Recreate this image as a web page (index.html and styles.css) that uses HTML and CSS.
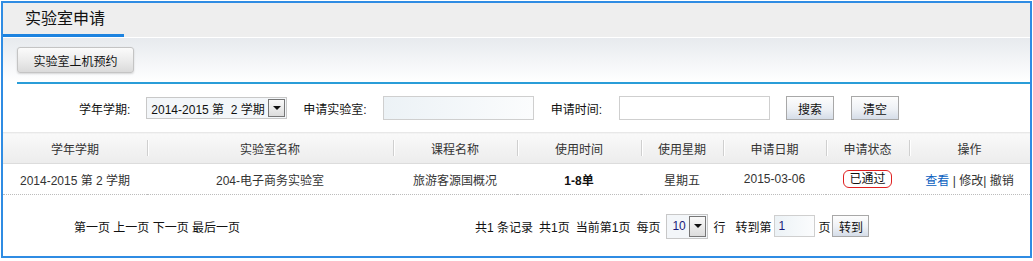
FILE: index.html
```html
<!DOCTYPE html>
<html lang="zh-CN">
<head>
  <meta charset="UTF-8">
  <title>实验室申请</title>
  <link rel="stylesheet" href="styles.css">
</head>
<body>
  <div class="panel">
    <div class="tabbar">
      <div class="tab">实验室申请</div>
    </div>
    <div class="toolbar">
      <button class="btn-tool">实验室上机预约</button>
    </div>

    <div class="search">
      <label class="lbl">学年学期:</label>
      <div class="select sel-term">
        <span class="sel-text">2014-2015 第&nbsp; 2 学期</span>
        <span class="sel-arrow"><i></i></span>
      </div>
      <label class="lbl">申请实验室:</label>
      <input type="text" class="field field-lab">
      <label class="lbl">申请时间:</label>
      <input type="text" class="field field-time">
      <button class="btn-search">搜索</button>
      <button class="btn-search">清空</button>
    </div>

    <table class="grid">
      <thead>
        <tr>
          <th class="c1">学年学期</th>
          <th class="c2">实验室名称</th>
          <th class="c3">课程名称</th>
          <th class="c4">使用时间</th>
          <th class="c5">使用星期</th>
          <th class="c6">申请日期</th>
          <th class="c7">申请状态</th>
          <th class="c8">操作</th>
        </tr>
      </thead>
      <tbody>
        <tr>
          <td>2014-2015 第 2 学期</td>
          <td>204-电子商务实验室</td>
          <td>旅游客源国概况</td>
          <td class="strong">1-8单</td>
          <td>星期五</td>
          <td>2015-03-06</td>
          <td><span class="status">已通过</span></td>
          <td class="ops"><a href="#" class="view">查看</a> | <a href="#">修改</a>| <a href="#">撤销</a></td>
        </tr>
      </tbody>
    </table>

    <div class="pager">
      <div class="pager-nav">第一页 上一页 下一页 最后一页</div>
      <div class="pager-info">
        <span>共1 条记录</span>
        <span>共1页</span>
        <span>当前第1页</span>
        <span>每页</span>
        <div class="select sel-size">
          <span class="sel-text">10</span>
          <span class="sel-arrow"><i></i></span>
        </div>
        <span>行</span>
        <span class="gap">转到第</span>
        <input type="text" class="field field-page" value="1">
        <span class="tight">页</span><button class="btn-go">转到</button>
      </div>
    </div>
  </div>
</body>
</html>
```

FILE: styles.css
```css
body {
  margin: 0;
  padding: 1px;
  font-family: "Liberation Sans", "Noto Sans CJK SC", sans-serif;
  font-size: 12px;
  color: #222;
  background: #fff;
}
.panel {
  box-sizing: border-box;
  width: 1031px;
  height: 257px;
  border: 2px solid #2f8ce3;
  background: #fff;
}
.tabbar {
  height: 34px;
  background: #eeeeee;
  border-bottom: 1px solid #fff;
}
.tab {
  box-sizing: border-box;
  width: 121px;
  height: 34px;
  padding: 5px 0 0 22px;
  font-size: 16px;
  line-height: 22px;
  color: #111;
  border-bottom: 3px solid #1d83e0;
}
.toolbar {
  height: 46px;
  padding: 9px 0 0 14px;
  box-sizing: border-box;
  background: linear-gradient(#e7eaee, #fafbfc 80%, #fff);
  border-bottom: 2px solid #2a9dd8;
  position: relative;
}
.toolbar::before {
  content: "";
  position: absolute;
  left: 0;
  bottom: -2px;
  width: 14px;
  height: 2px;
  background: #fff;
}
.btn-tool {
  width: 117px;
  height: 26px;
  padding: 0;
  font-family: inherit;
  font-size: 12px;
  color: #111;
  background: linear-gradient(#fbfbfb, #e9e9e9 60%, #dadada);
  border: 1px solid #c4c4c4;
  border-radius: 3px;
  box-shadow: 0 1px 2px rgba(0, 0, 0, 0.15);
}
.search {
  display: flex;
  align-items: center;
  height: 48px;
  padding-left: 76px;
}
.lbl {
  color: #111;
  white-space: nowrap;
}
.select {
  display: flex;
  align-items: center;
  box-sizing: border-box;
  border: 1px solid #c8c8c8;
  background: #f3f6f9;
}
.sel-term {
  width: 141px;
  height: 22px;
  margin: 0 16px;
  padding: 1px;
}
.sel-text {
  flex: 1;
  padding-left: 3px;
  font-size: 12px;
  white-space: nowrap;
  overflow: hidden;
  color: #111;
}
.sel-arrow {
  flex: none;
  box-sizing: border-box;
  width: 17px;
  height: 18px;
  border: 1px solid #777;
  background: linear-gradient(#fafafa, #dcdcdc);
  display: flex;
  align-items: center;
  justify-content: center;
}
.sel-arrow i {
  width: 0;
  height: 0;
  border-left: 4px solid transparent;
  border-right: 4px solid transparent;
  border-top: 4px solid #111;
}
.field {
  box-sizing: border-box;
  height: 24px;
  border: 1px solid #cfcfcf;
  font-family: inherit;
  font-size: 12px;
  padding: 0 3px;
}
.field-lab {
  width: 151px;
  margin: 0 17px 0 16px;
  background: linear-gradient(90deg, #ecf2f6, #fbfcfd);
}
.field-time {
  width: 151px;
  margin: 0 16px 0 17px;
  background: #fff;
}
.btn-search {
  width: 48px;
  height: 24px;
  padding: 0;
  margin-right: 17px;
  font-family: inherit;
  font-size: 12px;
  color: #111;
  border: 1px solid #a8a8a8;
  background: linear-gradient(#fdfdfd, #eef1f5 55%, #d5dde8);
}
.grid {
  width: 1027px;
  border-collapse: collapse;
  table-layout: fixed;
}
.grid th {
  height: 30px;
  padding: 0;
  font-weight: normal;
  color: #333;
  background: linear-gradient(#f9f9f9, #ececec);
  border-top: 1px solid #e8e8e8;
  border-bottom: 1px solid #dcdcdc;
  position: relative;
}
.grid th + th::before {
  content: "";
  position: absolute;
  left: 0;
  top: 7px;
  height: 16px;
  border-left: 1px solid #cfcfcf;
  box-shadow: 1px 0 0 #fff;
}
.c1 { width: 144px; }
.c2 { width: 246px; }
.c3 { width: 124px; }
.c4 { width: 124px; }
.c5 { width: 82px; }
.c6 { width: 103px; }
.c7 { width: 83px; }
.c8 { width: 121px; }
.grid td {
  height: 30px;
  padding: 0;
  text-align: center;
  color: #333;
  border-bottom: 1px dotted #bcbcbc;
}
.grid td.strong {
  font-weight: bold;
  color: #111;
}
.status {
  display: inline-block;
  padding: 0 5px;
  line-height: 16px;
  border: 1px solid #e02020;
  border-radius: 6px;
  color: #111;
}
.ops {
  color: #333;
}
.ops a {
  color: #333;
  text-decoration: none;
}
.ops a.view {
  color: #0a5fbf;
}
.pager {
  display: flex;
  align-items: center;
  height: 62px;
  padding-left: 71px;
  color: #111;
}
.pager-nav {
  width: 401px;
}
.pager-info {
  display: flex;
  align-items: center;
}
.pager-info > span {
  margin-right: 6px;
}
.pager-info > span.gap {
  margin-left: 4px;
  margin-right: 3px;
}
.pager-info > span.tight {
  margin: 0 2px 0 3px;
}
.sel-size {
  width: 42px;
  height: 25px;
  margin-right: 5px;
  padding: 1px;
}
.sel-size .sel-text {
  color: #1a1a7a;
  padding-left: 4px;
}
.sel-size .sel-arrow {
  height: 21px;
}
.field-page {
  width: 41px;
  height: 22px;
  color: #1a1a7a;
  background: linear-gradient(90deg, #ecf2f6, #fbfcfd);
}
.btn-go {
  width: 37px;
  height: 22px;
  padding: 0;
  font-family: inherit;
  font-size: 12px;
  color: #111;
  border: 1px solid #a8a8a8;
  background: linear-gradient(#fdfdfd, #eef1f5 55%, #d5dde8);
}
```
